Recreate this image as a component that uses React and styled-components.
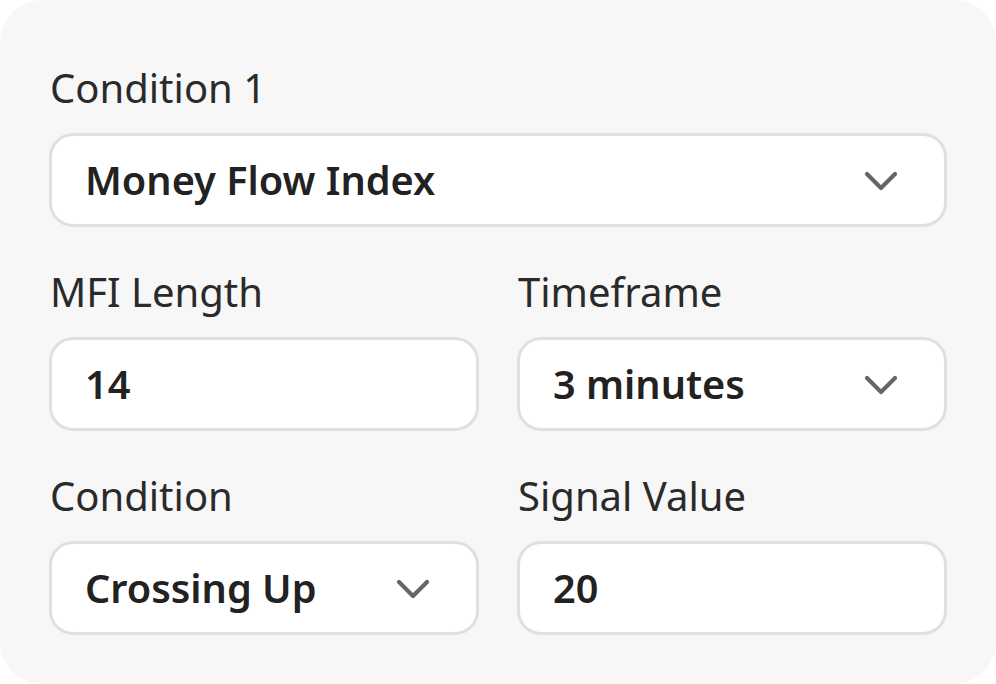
import React from "react";
import styled, { createGlobalStyle } from "styled-components";

const Global = createGlobalStyle`
  html, body { margin: 0; padding: 0; background: #ffffff; }
  body { font-family: "Noto Sans", "Open Sans", sans-serif; }
  * { box-sizing: border-box; }
`;

const Card = styled.div`
  width: 996px;
  height: 684px;
  background: #f7f7f7;
  border-radius: 42px;
  padding: 62px 49px 49px 49px;
  display: flex;
  flex-direction: column;
  gap: 39px;
`;

const Row = styled.div`
  display: grid;
  grid-template-columns: ${(p) => (p.$cols === 2 ? "1fr 1fr" : "1fr")};
  column-gap: 38px;
`;

const Field = styled.div`
  display: flex;
  flex-direction: column;
  gap: 19px;
`;

const Label = styled.div`
  font-size: 40px;
  line-height: 52px;
  height: 52px;
  font-weight: 400;
  color: #2a2a2a;
  padding-left: 1px;
`;

const Box = styled.div`
  height: 94px;
  background: #ffffff;
  border: 3px solid #e0e0e0;
  border-radius: 24px;
  display: flex;
  align-items: center;
  justify-content: space-between;
  padding: 0 46px 0 33px;
`;

const Value = styled.span`
  font-size: 39.7px;
  line-height: 52px;
  font-weight: 570;
  color: #222222;
`;

const Chevron = () => (
  <svg width="34" height="21" viewBox="0 0 34 21" style={{ marginTop: 3 }}>
    <path
      d="M3 3 L17 17 L31 3"
      fill="none"
      stroke="#666666"
      strokeWidth="4.2"
      strokeLinecap="round"
      strokeLinejoin="round"
    />
  </svg>
);

const Input = ({ value, select }) => (
  <Box>
    <Value>{value}</Value>
    {select && <Chevron />}
  </Box>
);

export default function App() {
  return (
    <>
      <Global />
      <Card>
        <Row>
          <Field>
            <Label>Condition 1</Label>
            <Input value="Money Flow Index" select />
          </Field>
        </Row>
        <Row $cols={2}>
          <Field>
            <Label>MFI Length</Label>
            <Input value="14" />
          </Field>
          <Field>
            <Label>Timeframe</Label>
            <Input value="3 minutes" select />
          </Field>
        </Row>
        <Row $cols={2}>
          <Field>
            <Label>Condition</Label>
            <Input value="Crossing Up" select />
          </Field>
          <Field>
            <Label>Signal Value</Label>
            <Input value="20" />
          </Field>
        </Row>
      </Card>
    </>
  );
}
